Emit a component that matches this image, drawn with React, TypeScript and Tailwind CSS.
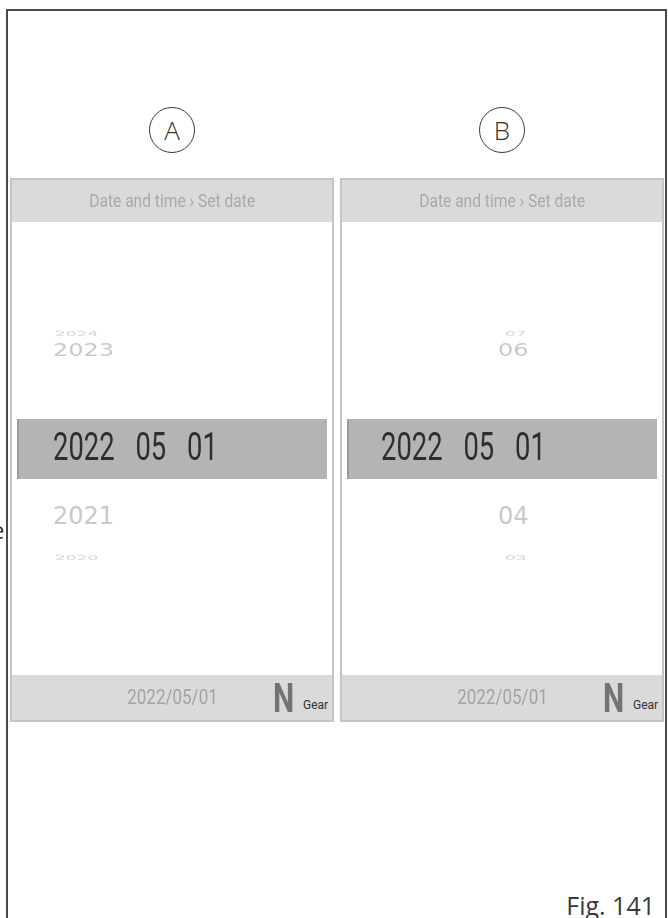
import React from 'react'

const ui = 'font-["Roboto","Liberation_Sans",sans-serif]'

type Column = {
  label: string
  farUp: string
  up: string
  down: string
  farDown: string
  neighbourPad: string
  farPad: string
  selectedPad: string
}

const columns: Column[] = [
  { label: 'A', farUp: '2024', up: '2023', down: '2021', farDown: '2020', neighbourPad: 'pl-[41px]', farPad: 'pl-[43px]', selectedPad: 'pl-[34px]' },
  { label: 'B', farUp: '07', up: '06', down: '04', farDown: '03', neighbourPad: 'pl-[156px]', farPad: 'pl-[163px]', selectedPad: 'pl-[32px]' },
]

function Marker({ label }: { label: string }) {
  return (
    <div className="flex justify-center">
      <div className="flex h-[46px] w-[46px] items-center justify-center rounded-full border-[1.5px] border-[#3a3a3a] font-['Open_Sans',sans-serif] text-[26px] font-light leading-none text-[#333]">
        {label}
      </div>
    </div>
  )
}

function Picker({ col }: { col: Column }) {
  return (
    <div className="flex h-[544px] flex-col border-2 border-[#c4c4c4] bg-white">
      <div className={`flex h-[42px] items-center justify-center bg-[#dadada] ${ui}`}>
        <span className="scale-x-[0.82] whitespace-nowrap text-[19px] text-[#a9a9a9]">Date and time › Set date</span>
      </div>

      <div className="flex flex-1 flex-col">
        <div className="h-[103px]" />
        <div className={`flex h-[16px] items-center ${col.farPad}`}>
          <span className="scale-y-40 font-['DejaVu_Sans',sans-serif] text-[17px] leading-none text-[#d4d4d4] blur-[0.6px]">
            {col.farUp}
          </span>
        </div>
        <div className={`flex h-[18px] items-center ${col.neighbourPad}`}>
          <span className="scale-y-75 font-['DejaVu_Sans',sans-serif] text-[24px] leading-none text-[#c9c9c9]">
            {col.up}
          </span>
        </div>
        <div className="h-[60px]" />
        <div className="mx-[5px] flex h-[60px] items-center border-l-2 border-[#9c9c9c] bg-[#b4b4b4]">
          <div className={col.selectedPad}>
            <div className={`flex origin-left scale-x-[0.72] gap-[29px] whitespace-nowrap pb-[4px] text-[38px] leading-none text-[#2e2e2e] ${ui}`}>
              <span>2022</span>
              <span>05</span>
              <span>01</span>
            </div>
          </div>
        </div>
        <div className="h-[26px]" />
        <div className={`flex h-[22px] items-center ${col.neighbourPad}`}>
          <span className="font-['DejaVu_Sans',sans-serif] text-[24px] leading-none text-[#c9c9c9]">
            {col.down}
          </span>
        </div>
        <div className="h-[23px]" />
        <div className={`flex h-[14px] items-center ${col.farPad}`}>
          <span className="scale-y-40 font-['DejaVu_Sans',sans-serif] text-[17px] leading-none text-[#d4d4d4] blur-[0.6px]">
            {col.farDown}
          </span>
        </div>
        <div className="flex-1" />
      </div>

      <div className={`flex h-[45px] items-center bg-[#dadada] ${ui}`}>
        <div className="flex w-[206px] justify-end">
          <span className="origin-right scale-x-[0.81] whitespace-nowrap text-[21px] leading-none text-[#a3a3a3]">2022/05/01</span>
        </div>
        <div className="w-[55px]" />
        <div className="flex w-[21px] items-center pt-[2px]">
          <span className="origin-left scale-x-75 text-[40px] font-bold leading-none text-[#737373]">N</span>
        </div>
        <span className="ml-[9px] mt-[14px] text-[12px] leading-none text-[#333]">Gear</span>
      </div>
    </div>
  )
}

export default function App() {
  return (
    <div className="relative h-[918px] w-[668px] overflow-hidden bg-white">
      <span className="absolute left-[-9px] top-[518px] font-['Open_Sans',sans-serif] text-[24px] leading-none text-[#333]">
        e
      </span>

      <div className="ml-[6px] mt-[9px] flex h-[909px] w-[661px] flex-col border-2 border-b-0 border-[#4a4a4a]">
        <div className="ml-[2px] grid grid-cols-[324px_324px] gap-x-[6px] pt-[96px]">
          {columns.map(col => (
            <Marker key={col.label} label={col.label} />
          ))}
        </div>

        <div className="ml-[2px] mt-[25px] grid grid-cols-[324px_324px] gap-x-[6px]">
          {columns.map(col => (
            <Picker key={col.label} col={col} />
          ))}
        </div>

        <div className="flex flex-1 items-end justify-end pr-[10px]">
          <span className="font-['Open_Sans',sans-serif] text-[25px] leading-none text-[#3a3a3a]">Fig. 141</span>
        </div>
      </div>
    </div>
  )
}
